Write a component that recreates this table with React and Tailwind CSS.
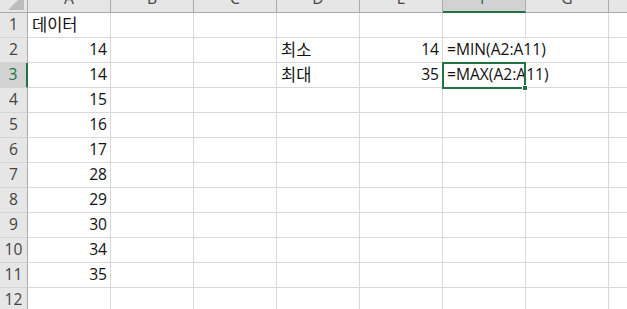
import React from 'react'

const COLS = ['A', 'B', 'C', 'D', 'E', 'F', 'G', 'H']

// sheet contents: row -> col -> { v, num, ko, spill }
const DATA = {
  1: { A: { v: '데이터', ko: true } },
  2: { A: { v: '14', num: true }, D: { v: '최소', ko: true }, E: { v: '14', num: true }, F: { v: '=MIN(A2:A11)', spill: true } },
  3: { A: { v: '14', num: true }, D: { v: '최대', ko: true }, E: { v: '35', num: true }, F: { v: '=MAX(A2:A11)', spill: true } },
  4: { A: { v: '15', num: true } },
  5: { A: { v: '16', num: true } },
  6: { A: { v: '17', num: true } },
  7: { A: { v: '28', num: true } },
  8: { A: { v: '29', num: true } },
  9: { A: { v: '30', num: true } },
  10: { A: { v: '34', num: true } },
  11: { A: { v: '35', num: true } },
  12: {},
}

const ROWS = Object.keys(DATA).map(Number)

const Corner = () => (
  <div className="w-[28px] h-[13px] shrink-0 bg-[#e6e6e6] border-r border-b border-[#ababab] relative overflow-hidden">
    <svg className="absolute left-0 top-0" width="27" height="12" viewBox="0 0 27 12">
      <polygon points="8,10 24,10 24,-6" fill="#bdbdbd" />
    </svg>
  </div>
)

const ColHeader = ({ col }) => {
  const active = col === 'F'
  return (
    <div
      className={`w-[83px] h-[13px] shrink-0 overflow-hidden border-r ${
        active
          ? 'bg-[#d2d2d2] text-[#217346] border-b-2 border-b-[#217346] border-r-[#ababab]'
          : 'bg-[#e6e6e6] text-[#444] border-b border-[#ababab]'
      }`}
    >
      <div className="h-[27px] -mt-[15px] flex items-center justify-center">{col}</div>
    </div>
  )
}

const RowHeader = ({ n }) => {
  const active = n === 3
  return (
    <div
      className={`w-[28px] h-[25px] shrink-0 flex items-center justify-center border-b border-[#d4d4d4] ${
        active
          ? 'bg-[#d2d2d2] text-[#217346] border-r-2 border-r-[#217346]'
          : 'bg-[#e6e6e6] text-[#444] border-r border-r-[#ababab]'
      }`}
    >
      {n}
    </div>
  )
}

const Cell = ({ cell }) => (
  <div
    className={`w-[83px] h-[25px] shrink-0 flex items-center whitespace-nowrap border-b border-[#d9d9d9] ${
      cell?.spill ? '' : 'border-r'
    } ${cell?.num ? 'justify-end pr-[3px]' : 'pl-[4px]'} ${cell?.ko ? 'text-[16.5px]' : ''}`}
  >
    {cell?.v}
  </div>
)

export default function App() {
  return (
    <div
      className="w-[627px] h-[309px] overflow-hidden bg-white text-[15.6px] text-[#111] relative"
      style={{ fontFamily: '"Open Sans", "Noto Sans CJK KR", sans-serif' }}
    >
      <div className="flex">
        <Corner />
        {COLS.map((c) => (
          <ColHeader key={c} col={c} />
        ))}
      </div>
      {ROWS.map((r) => (
        <div key={r} className="flex">
          <RowHeader n={r} />
          {COLS.map((c) => (
            <Cell key={c} cell={DATA[r][c]} />
          ))}
        </div>
      ))}

      {/* active cell frame on F3 with fill handle */}
      <div className="absolute left-[442px] top-[62px] w-[84px] h-[27px] border-2 border-[#217346] pointer-events-none">
        <div className="absolute -right-[4px] -bottom-[4px] w-[6px] h-[6px] bg-[#217346] border border-white" />
      </div>
    </div>
  )
}
